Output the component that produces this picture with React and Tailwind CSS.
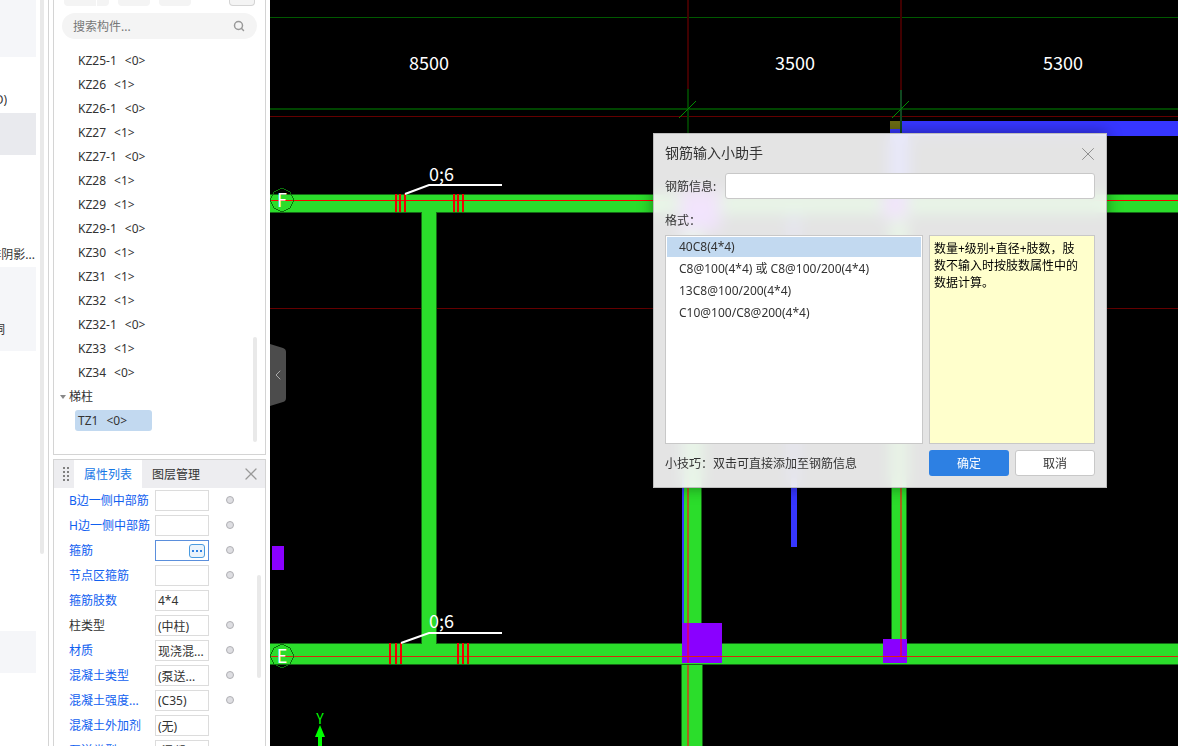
import { useState } from "react";
import { ChevronLeft, Search, X } from "lucide-react";

const sideBlocks = [
  { h: "h-[57px]", bg: "bg-[#f5f6f9]" },
  { h: "h-14", text: "(D)", w: "w-[7px]", align: "items-end pb-[5px]" },
  { h: "h-[42px]", bg: "bg-[#e9eaee]" },
  { h: "h-[70px]" },
  { h: "h-[42px]", text: "排阴影...", w: "w-[35px]", align: "items-end pb-1" },
  { h: "h-[42px]", bg: "bg-[#f5f6f9]" },
  { h: "h-[42px]", bg: "bg-[#f5f6f9]", text: "洞", w: "w-[5px]", align: "items-center" },
  { h: "h-[280px]" },
  { h: "h-[42px]", bg: "bg-[#f5f6f9]" },
];

const components = [
  ["KZ25-1", 0],
  ["KZ26", 1],
  ["KZ26-1", 0],
  ["KZ27", 1],
  ["KZ27-1", 0],
  ["KZ28", 1],
  ["KZ29", 1],
  ["KZ29-1", 0],
  ["KZ30", 1],
  ["KZ31", 1],
  ["KZ32", 1],
  ["KZ32-1", 0],
  ["KZ33", 1],
  ["KZ34", 0],
];

const properties = [
  { label: "B边一侧中部筋", value: "", blue: true, dot: true },
  { label: "H边一侧中部筋", value: "", blue: true, dot: true },
  { label: "箍筋", value: "", blue: true, dot: true, active: true },
  { label: "节点区箍筋", value: "", blue: true, dot: true },
  { label: "箍筋肢数", value: "4*4", blue: true },
  { label: "柱类型", value: "(中柱)", dot: true },
  { label: "材质", value: "现浇混...", blue: true, dot: true },
  { label: "混凝土类型", value: "(泵送...", blue: true, dot: true },
  { label: "混凝土强度...", value: "(C35)", blue: true, dot: true },
  { label: "混凝土外加剂", value: "(无)", blue: true },
  { label: "泵送类型", value: "(混凝...", blue: true },
];

const formats = [
  "40C8(4*4)",
  "C8@100(4*4) 或 C8@100/200(4*4)",
  "13C8@100/200(4*4)",
  "C10@100/C8@200(4*4)",
];

function SideStrip() {
  return (
    <aside className="flex w-[49px] shrink-0 border-r border-[#d4d4d4]">
      <div className="w-9 shrink-0">
        {sideBlocks.map((b, i) => (
          <div key={i} className={`flex ${b.h} ${b.bg || ""} ${b.align || ""}`}>
            {b.text && (
              <span className={`flex ${b.w} justify-end overflow-hidden whitespace-nowrap`}>
                {b.text}
              </span>
            )}
          </div>
        ))}
      </div>
      <div className="ml-1 h-[554px] w-1 rounded-b bg-[#e9e9e9]" />
    </aside>
  );
}

function ComponentTree() {
  return (
    <section className="flex h-[455px] shrink-0 flex-col border-x border-b border-[#d4d4d4]">
      <div className="flex h-[6px] px-[10px]">
        <button type="button" aria-label="新建" className="w-8 rounded-bl bg-[#f4f4f4]" />
        <button type="button" aria-label="新建选项" className="ml-px w-3 rounded-br bg-[#f4f4f4]" />
        <button type="button" aria-label="复制" className="ml-[9px] w-8 rounded-b bg-[#f4f4f4]" />
        <button type="button" aria-label="删除" className="ml-[9px] w-8 rounded-b bg-[#f4f4f4]" />
        <button
          type="button"
          aria-label="更多"
          className="ml-auto w-[26px] rounded-b border-x border-b border-[#d4d4d4] bg-[#f4f4f4]"
        />
      </div>
      <label className="mx-2 mt-[7px] flex h-[26px] items-center rounded-full bg-[#f4f4f4] pr-3 pl-[11px]">
        <input
          type="search"
          aria-label="搜索构件"
          placeholder="搜索构件..."
          className="min-w-0 flex-1 bg-transparent pt-[2px] outline-none placeholder:text-[#777]"
        />
        <Search className="size-3 text-[#999]" strokeWidth={3} />
      </label>

      <div className="mt-[10px] flex min-h-0 flex-1">
        <ul className="flex-1">
          {components.map(([name, count]) => (
            <li key={name} className="flex h-6 items-center gap-2 pl-6">
              <span>{name}</span>
              <span>&lt;{count}&gt;</span>
            </li>
          ))}
          <li>
            <div className="flex h-6 items-center gap-[3px] pl-[6px]">
              <svg className="h-1 w-[6px]" viewBox="0 0 6 4">
                <path d="M0 0h6L3 4z" fill="#888" />
              </svg>
              <span>梯柱</span>
            </div>
            <div className="mt-px ml-[21px] flex h-[21px] w-[77px] items-center gap-2 rounded-[3px] bg-[#c2d9f0] pl-[3px]">
              <span>TZ1</span>
              <span>&lt;0&gt;</span>
            </div>
          </li>
        </ul>
        <div className="mr-2 mb-3 h-[105px] w-1 self-end rounded-full bg-[#e9e9e9]" />
      </div>
    </section>
  );
}

function PropertyPanel() {
  return (
    <section className="mt-1 flex min-h-0 flex-1 flex-col overflow-hidden border-x border-t border-[#d4d4d4]">
      <div className="flex h-7 shrink-0 items-stretch bg-[#ededf0]">
        <svg className="mt-[7px] ml-[9px] h-[14px] w-[7px]" viewBox="0 0 7 14" fill="#808080">
          {[0, 4, 8, 12].map((y) => (
            <g key={y}>
              <rect x="0" y={y} width="2" height="2" />
              <rect x="4" y={y} width="2" height="2" />
            </g>
          ))}
        </svg>
        <button type="button" className="ml-1 w-[68px] bg-white pt-[2px] text-[#1476e6]">
          属性列表
        </button>
        <button type="button" className="w-[68px] pt-[2px]">
          图层管理
        </button>
        <button type="button" aria-label="关闭" className="mr-1 ml-auto">
          <X className="size-5 text-[#999]" strokeWidth={1.5} />
        </button>
      </div>

      <div className="flex min-h-0 flex-1">
        <div className="flex-1">
          {properties.map((p, i) => (
            <div key={p.label} className="flex h-[25px] items-center pl-[15px]">
              <label
                htmlFor={`prop-${i}`}
                className={`w-[86px] shrink-0 whitespace-nowrap ${p.blue ? "text-[#1060f0]" : ""}`}
              >
                {p.label}
              </label>
              <div
                className={`flex h-[21px] w-[54px] shrink-0 items-center border bg-white ${
                  p.active ? "border-[#5b8fdc]" : "border-[#dcdcdc]"
                }`}
              >
                <input
                  id={`prop-${i}`}
                  defaultValue={p.value}
                  className="h-full w-0 min-w-0 flex-1 bg-transparent pl-[2px] outline-none"
                />
                {p.active && (
                  <button
                    type="button"
                    aria-label="钢筋输入小助手"
                    className="mr-[3px] flex h-[14px] w-4 items-center justify-center gap-[2px] rounded-[3px] border border-[#4a9be0] bg-[#eaf3fb]"
                  >
                    <i className="size-[2px] bg-[#2d80e3]" />
                    <i className="size-[2px] bg-[#2d80e3]" />
                    <i className="size-[2px] bg-[#2d80e3]" />
                  </button>
                )}
              </div>
              {p.dot && (
                <span className="mb-px ml-[17px] size-2 shrink-0 rounded-full border border-[#b0b0b4] bg-[#dedee2]" />
              )}
            </div>
          ))}
        </div>
        <div className="mt-[87px] mr-1 h-[103px] w-1 shrink-0 rounded-full bg-[#e9e9e9]" />
      </div>
    </section>
  );
}

// axis label in an octagon at the left end of a beam
function AxisMark({ y, name }) {
  return (
    <g>
      <path
        d={`M12 ${y - 12}l8 4 4 8-4 8-8 4-8-4-4-8 4-8z`}
        fill="none"
        stroke="#0b700b"
      />
      <text x="12" y={y + 7} fill="#fff" fontSize="18" textAnchor="middle">
        {name}
      </text>
    </g>
  );
}

function Stirrups({ xs, y, h }) {
  return xs.map((x) => <rect key={x} x={x} y={y} width="2" height={h} fill="#f00000" />);
}

function Drawing() {
  return (
    <svg
      className="block h-full w-full font-['Noto_Sans_CJK_SC',sans-serif]"
      shapeRendering="crispEdges"
    >
      {/* grid and dimension lines */}
      <rect y="17" width="100%" height="1" fill="#005800" />
      <rect y="108" width="100%" height="2" fill="#004400" />
      <rect y="116" width="100%" height="1" fill="#640000" />
      <rect y="308" width="100%" height="1" fill="#640000" />
      <rect x="417" width="2" height="89" fill="#400000" />
      <rect x="630" width="2" height="90" fill="#400000" />
      <rect x="417" y="89" width="2" height="80" fill="#004000" />

      {/* blue beams */}
      <rect x="620" y="121" width="100%" height="15" fill="#3636ff" />
      <rect x="620" y="136" width="18" height="60" fill="#3636ff" />
      <rect x="620" y="121" width="11" height="8" fill="#6b6b14" />
      <rect x="521" y="212" width="6" height="335" fill="#3636ff" />
      <rect x="630" y="90" width="2" height="43" fill="#104820" />
      <path d="M409 118l17-17M622 118l17-17" stroke="#009000" shapeRendering="auto" />

      {/* green beams */}
      <g fill="#2bdd2b" stroke="#156815">
        <rect x="151.5" y="200.5" width="15" height="450" />
        <rect x="412.5" y="200.5" width="19" height="450" />
        <rect x="621.5" y="200.5" width="15" height="450" />
        <rect x="411.5" y="650.5" width="21" height="300" />
        <rect x="-1" y="194.5" width="102%" height="18" />
        <rect x="-1" y="643.5" width="102%" height="21" />
      </g>
      <rect x="152" y="210" width="14" height="4" fill="#2bdd2b" />
      <rect x="152" y="641" width="14" height="4" fill="#2bdd2b" />
      <rect x="412" y="213" width="2" height="411" fill="#3636ff" />
      <rect x="417" y="213" width="2" height="411" fill="#a8651c" />
      <rect x="417" y="665" width="2" height="100%" fill="#a8651c" />
      <rect x="630" y="213" width="2" height="427" fill="#a8651c" />

      {/* columns */}
      <g fill="#8a00ff">
        <rect x="2" y="546" width="12" height="24" />
        <rect x="410" y="190" width="40" height="40" />
        <rect x="613" y="194" width="24" height="24" />
        <rect x="412" y="623" width="40" height="40" />
        <rect x="613" y="639" width="24" height="24" />
      </g>
      <rect x="417" y="623" width="2" height="40" fill="#d00080" />
      <rect x="630" y="639" width="2" height="18" fill="#d00080" />
      <rect y="200" width="100%" height="1" fill="#ff0000" />
      <rect y="656" width="100%" height="1" fill="#d8280c" />

      <Stirrups xs={[125, 129, 134, 183, 187, 192]} y="194" h="18" />
      <Stirrups xs={[119, 125, 130, 187, 192, 197]} y="643" h="21" />

      <g fill="none" stroke="#fff" strokeWidth="2" shapeRendering="auto">
        <path d="M135 194l24-9h73" />
        <path d="M131 643l28-10h73" />
      </g>

      <g fill="#fff" fontSize="18">
        <text x="139" y="70">8500</text>
        <text x="505" y="70">3500</text>
        <text x="773" y="70">5300</text>
        <text x="159" y="181">0;6</text>
        <text x="159" y="628">0;6</text>
      </g>

      <AxisMark y={200} name="F" />
      <AxisMark y={656} name="E" />

      {/* Y axis arrow */}
      <g fill="#00ff00">
        <path d="M50 725l5 12H45z" shapeRendering="auto" />
        <rect x="48" y="735" width="4" height="100%" />
        <text x="50" y="724" fontSize="14" textAnchor="middle">
          Y
        </text>
      </g>
    </svg>
  );
}

function RebarDialog() {
  const [selected, setSelected] = useState(0);

  return (
    <div
      role="dialog"
      aria-label="钢筋输入小助手"
      className="absolute top-[133px] left-[383px] w-[454px] border border-[#bdbdbd] bg-[#fdfdfd]/90 px-[11px] pb-[11px] shadow-[0_0_14px_rgba(0,0,0,0.4)] backdrop-blur-sm"
    >
      <div className="flex h-[39px] items-center justify-between">
        <h2 className="pb-[2px] text-sm">钢筋输入小助手</h2>
        <button type="button" aria-label="关闭" className="-mr-1">
          <X className="size-[22px] text-[#888]" strokeWidth={1} />
        </button>
      </div>

      <div className="flex items-center gap-2">
        <label htmlFor="rebar" className="w-[52px] pt-[2px] whitespace-nowrap">
          钢筋信息:
        </label>
        <input
          id="rebar"
          className="h-[26px] min-w-0 flex-1 rounded-[3px] border border-[#c8c8c8] bg-white px-2 outline-none"
        />
      </div>

      <p className="flex h-9 items-center pt-2">格式：</p>

      <div className="flex h-[209px] gap-[6px]">
        <ul
          role="listbox"
          aria-label="格式"
          className="flex w-[258px] flex-col gap-[2px] border border-[#c8c8c8] bg-white p-px"
        >
          {formats.map((f, i) => (
            <li
              key={f}
              role="option"
              aria-selected={selected === i}
              onClick={() => setSelected(i)}
              className={`flex h-5 items-center pl-3 ${selected === i ? "bg-[#c2d9f0]" : ""}`}
            >
              {f}
            </li>
          ))}
        </ul>
        <p className="flex-1 border border-[#c8c8c8] bg-[#ffffcc] pt-1 pr-3 pl-1 leading-[17px] text-black">
          数量+级别+直径+肢数，肢数不输入时按肢数属性中的数据计算。
        </p>
      </div>

      <div className="mt-[6px] flex items-center gap-[6px]">
        <p className="flex-1 pt-[2px]">小技巧：双击可直接添加至钢筋信息</p>
        <button type="button" className="h-[26px] w-20 rounded-[3px] bg-[#2d80e3] pt-[2px] text-white">
          确定
        </button>
        <button
          type="button"
          className="h-[26px] w-20 rounded-[3px] border border-[#c8c8c8] bg-white pt-[2px]"
        >
          取消
        </button>
      </div>
    </div>
  );
}

export default function App() {
  return (
    <div className="flex h-screen overflow-hidden bg-white font-['Noto_Sans','Noto_Sans_CJK_SC',sans-serif] text-xs text-[#333]">
      <SideStrip />
      <div className="flex w-[221px] shrink-0 flex-col px-1">
        <ComponentTree />
        <PropertyPanel />
      </div>
      <main className="relative min-w-0 flex-1 overflow-hidden bg-black">
        <Drawing />
        <button
          type="button"
          aria-label="收起"
          className="absolute top-[344px] left-0 flex h-[62px] w-4 items-center justify-center text-[#aaa]"
        >
          <svg className="absolute inset-0" width="16" height="62">
            <path d="M0 0l13 4q3 1 3 4v46q0 3-3 4l-13 4z" fill="#4c4c4c" />
          </svg>
          <ChevronLeft className="relative size-4 shrink-0" strokeWidth={1.5} />
        </button>
        <RebarDialog />
      </main>
    </div>
  );
}
